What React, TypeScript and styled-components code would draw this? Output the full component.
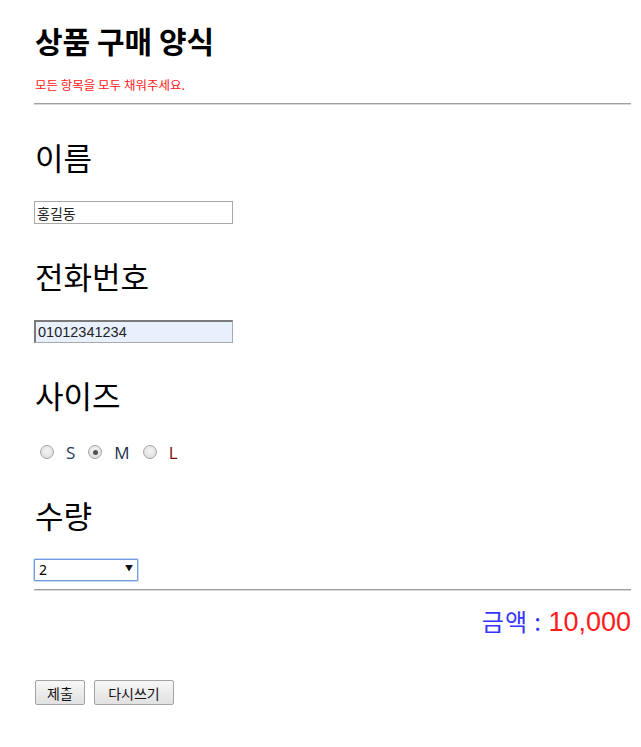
import React, { useState } from 'react'
import styled, { createGlobalStyle } from 'styled-components'

const GlobalStyle = createGlobalStyle`
  html, body {
    margin: 0;
    padding: 0;
    background: #ffffff;
  }
  body {
    font-family: 'Noto Sans CJK KR', 'Noto Sans', sans-serif;
    color: #000000;
  }
`

const Page = styled.form`
  display: flex;
  flex-direction: column;
  width: 597px;
  padding: 24px 0 40px 34px;
`

const Title = styled.h1`
  margin: 0;
  font-size: 30px;
  line-height: 32px;
  font-weight: 700;
  padding-left: 1px;
`

const ErrorText = styled.p`
  margin: 21px 0 0 1px;
  font-size: 12.5px;
  line-height: 16px;
  color: #ff2020;
`

const Rule = styled.hr<{ $gap: number }>`
  margin: ${(p) => p.$gap}px 0 0;
  height: 0;
  border: 0;
  border-top: 1px solid #a0a0a0;
  border-bottom: 1px solid #d8d8d8;
`

const Label = styled.h2`
  margin: 33px 0 0 1px;
  font-size: 31px;
  line-height: 38px;
  font-weight: 400;
`

const Control = styled.div<{ $gap?: number }>`
  margin-top: ${(p) => p.$gap ?? 26}px;
  display: flex;
  align-items: center;
`

const TextInput = styled.input<{ $filled?: boolean }>`
  box-sizing: border-box;
  width: 199px;
  height: 23px;
  padding: 1px 2px;
  font-family: ${(p) =>
    p.$filled ? "'Liberation Sans', Arial, sans-serif" : "'Noto Sans CJK KR', sans-serif"};
  font-size: ${(p) => (p.$filled ? '14.5px' : '14px')};
  color: #222222;
  background: ${(p) => (p.$filled ? '#e8f0fe' : '#ffffff')};
  border: 1px solid #a9a9a9;
  border-top-color: ${(p) => (p.$filled ? '#7a7a7a' : '#a9a9a9')};
  border-left-color: ${(p) => (p.$filled ? '#7a7a7a' : '#a9a9a9')};
  border-width: ${(p) => (p.$filled ? '2px 1px 1px 2px' : '1px')};
  outline: none;
`

const RadioGroup = styled.div`
  display: flex;
  align-items: center;
  height: 22px;
  margin-left: 6px;
`

const RadioOption = styled.label<{ $color: string }>`
  display: flex;
  align-items: center;
  gap: 12px;
  margin-right: 13px;
  font-family: 'Open Sans', 'Noto Sans', sans-serif;
  font-size: 17px;
  color: ${(p) => p.$color};
`

const RadioDot = styled.input`
  appearance: none;
  margin: 0;
  width: 14px;
  height: 14px;
  border-radius: 50%;
  border: 1px solid #a6a6a6;
  background: radial-gradient(circle at 50% 40%, #f6f6f6 0%, #d6d6d6 100%);
  position: relative;

  &:checked::after {
    content: '';
    position: absolute;
    left: 3.5px;
    top: 3.5px;
    width: 5px;
    height: 5px;
    border-radius: 50%;
    background: #505050;
  }
`

const SelectWrap = styled.div`
  position: relative;
  width: 104px;
  height: 22px;
`

const Select = styled.select`
  appearance: none;
  box-sizing: border-box;
  width: 100%;
  height: 100%;
  padding: 0 4px;
  font-family: 'Noto Sans', sans-serif;
  font-size: 14px;
  color: #000000;
  background: #ffffff;
  border: 1px solid #6f9be0;
  border-radius: 1px;
  box-shadow: 0 0 0 1px #c7daf6;
  outline: none;
`

const Arrow = styled.span`
  position: absolute;
  right: 5px;
  top: 7px;
  font-size: 8px;
  line-height: 10px;
  color: #111111;
  pointer-events: none;
`

const Total = styled.div`
  margin-top: 13px;
  display: flex;
  justify-content: flex-end;
  align-items: baseline;
  line-height: 34px;
`

const TotalLabel = styled.span`
  color: #3535ff;
  font-family: 'Noto Sans CJK KR', sans-serif;
  font-size: 24px;
  letter-spacing: 1px;
  white-space: pre;
`

const TotalValue = styled.span`
  color: #ff1a1a;
  font-family: 'Liberation Sans', Arial, sans-serif;
  font-size: 27px;
`

const Buttons = styled.div`
  margin-top: 41px;
  display: flex;
  gap: 9px;
  margin-left: 1px;
`

const Button = styled.button<{ $width: number }>`
  box-sizing: border-box;
  width: ${(p) => p.$width}px;
  height: 25px;
  padding: 0;
  font-family: 'Noto Sans CJK KR', sans-serif;
  font-size: 14px;
  color: #111111;
  background: linear-gradient(#f7f7f7, #e1e1e1);
  border: 1px solid #a3a3a3;
  border-radius: 2px;
`

const sizes = [
  { value: 'S', color: '#1f3a5c' },
  { value: 'M', color: '#1f2f4a' },
  { value: 'L', color: '#7a1010' },
]

export default function App() {
  const [size, setSize] = useState('M')
  const [qty, setQty] = useState('2')

  return (
    <>
      <GlobalStyle />
      <Page onSubmit={(e) => e.preventDefault()}>
        <Title>상품 구매 양식</Title>
        <ErrorText>모든 항목을 모두 채워주세요.</ErrorText>
        <Rule $gap={10} />

        <Label>이름</Label>
        <Control $gap={25}>
          <TextInput defaultValue="홍길동" />
        </Control>

        <Label>전화번호</Label>
        <Control $gap={25}>
          <TextInput $filled defaultValue="01012341234" />
        </Control>

        <Label>사이즈</Label>
        <Control $gap={27}>
          <RadioGroup>
            {sizes.map((s) => (
              <RadioOption key={s.value} $color={s.color}>
                <RadioDot
                  type="radio"
                  name="size"
                  checked={size === s.value}
                  onChange={() => setSize(s.value)}
                />
                {s.value}
              </RadioOption>
            ))}
          </RadioGroup>
        </Control>

        <Label>수량</Label>
        <Control $gap={22}>
          <SelectWrap>
            <Select value={qty} onChange={(e) => setQty(e.target.value)}>
              {['1', '2', '3', '4', '5'].map((n) => (
                <option key={n} value={n}>
                  {n}
                </option>
              ))}
            </Select>
            <Arrow>▼</Arrow>
          </SelectWrap>
        </Control>

        <Rule $gap={11} />
        <Total>
          <TotalLabel>금액 : </TotalLabel>
          <TotalValue>{(Number(qty) * 5000).toLocaleString('en-US')}</TotalValue>
        </Total>

        <Buttons>
          <Button $width={50} type="submit">
            제출
          </Button>
          <Button $width={80} type="reset">
            다시쓰기
          </Button>
        </Buttons>
      </Page>
    </>
  )
}
